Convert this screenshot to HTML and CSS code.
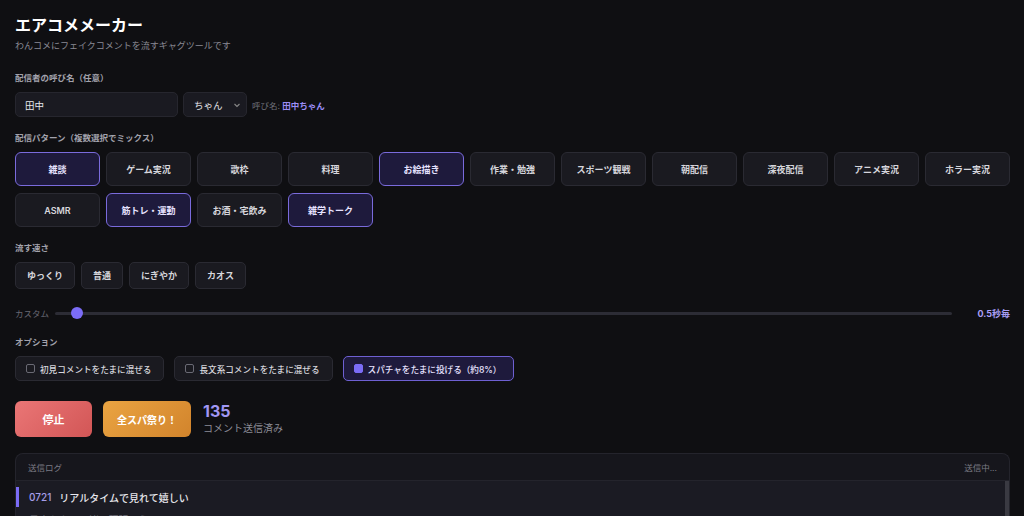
FILE: index.html
```html
<!DOCTYPE html>
<html lang="ja">
<head>
    <meta charset="utf-8">
    <title>エアコメメーカー</title>
    <link rel="stylesheet" href="styles.css">
</head>
<body>
    <div class="app">
        <h1>エアコメメーカー</h1>
        <p class="sub">わんコメにフェイクコメントを流すギャグツールです</p>

        <div class="section first">
            <div class="label">配信者の呼び名（任意）</div>
            <div class="name-row">
                <div class="input">田中</div>
                <div class="select">
                    <span>ちゃん</span>
                    <svg width="8" height="8" viewBox="0 0 8 8"><path d="M1.5 3 L4 5.5 L6.5 3" fill="none" stroke="#888" stroke-width="1.1"/></svg>
                </div>
                <div class="preview">呼び名: <b>田中ちゃん</b></div>
            </div>
        </div>

        <div class="section">
            <div class="label">配信パターン（複数選択でミックス）</div>
            <div class="patterns">
                <div class="chip on">雑談</div>
                <div class="chip">ゲーム実況</div>
                <div class="chip">歌枠</div>
                <div class="chip">料理</div>
                <div class="chip on">お絵描き</div>
                <div class="chip">作業・勉強</div>
                <div class="chip">スポーツ観戦</div>
                <div class="chip">朝配信</div>
                <div class="chip">深夜配信</div>
                <div class="chip">アニメ実況</div>
                <div class="chip">ホラー実況</div>
                <div class="chip">ASMR</div>
                <div class="chip on">筋トレ・運動</div>
                <div class="chip">お酒・宅飲み</div>
                <div class="chip on">雑学トーク</div>
            </div>
        </div>

        <div class="section">
            <div class="label">流す速さ</div>
            <div class="speeds">
                <div class="speed">ゆっくり</div>
                <div class="speed">普通</div>
                <div class="speed">にぎやか</div>
                <div class="speed">カオス</div>
            </div>
        </div>

        <div class="slider-row">
            <span class="slider-label">カスタム</span>
            <div class="track"><div class="thumb"></div></div>
            <span class="slider-value">0.5秒毎</span>
        </div>

        <div class="section">
            <div class="label">オプション</div>
            <div class="options">
                <div class="option"><span class="box"></span>初見コメントをたまに混ぜる</div>
                <div class="option"><span class="box"></span>長文系コメントをたまに混ぜる</div>
                <div class="option on"><span class="box"></span>スパチャをたまに投げる（約8%）</div>
            </div>
        </div>

        <div class="actions">
            <div class="btn stop">停止</div>
            <div class="btn festival">全スパ祭り！</div>
            <div class="count">
                <div class="count-num">135</div>
                <div class="count-label">コメント送信済み</div>
            </div>
        </div>

        <div class="log">
            <div class="log-head">
                <span>送信ログ</span>
                <span>送信中...</span>
            </div>
            <div class="log-list">
                <div class="log-row latest"><span class="log-id">0721</span>リアルタイムで見れて嬉しい</div>
                <div class="log-row">最高かよ、一緒に頑張ろう</div>
            </div>
        </div>
    </div>
</body>
</html>
```

FILE: styles.css
```css
body {
    margin: 0;
    background: #0f0f12;
    color: #e4e4ea;
    font-family: Inter, "Noto Sans CJK JP", sans-serif;
    height: 516px;
    overflow: hidden;
}
.app {
    padding: 14px 14px 0 15px;
}
h1 {
    margin: 0;
    font-size: 16px;
    line-height: 22px;
    font-weight: 700;
    color: #fff;
}
.sub {
    margin: 3px 0 0;
    font-size: 9px;
    line-height: 14px;
    color: #8a8a94;
}
.section {
    margin-top: 15px;
}
.section.first {
    margin-top: 19px;
}
.label {
    font-size: 8.5px;
    line-height: 12px;
    font-weight: 600;
    color: #a2a2ac;
    margin-bottom: 8px;
}
.name-row {
    display: flex;
    align-items: center;
}
.input {
    width: 163px;
    height: 25px;
    box-sizing: border-box;
    padding: 0 9px;
    display: flex;
    align-items: center;
    background: #1a1a21;
    border: 1px solid #26262e;
    border-radius: 5px;
    font-size: 9.5px;
    color: #e8e8ee;
}
.select {
    margin-left: 5px;
    width: 64px;
    height: 25px;
    box-sizing: border-box;
    padding: 0 5px 0 10px;
    display: flex;
    align-items: center;
    justify-content: space-between;
    background: #1a1a21;
    border: 1px solid #26262e;
    border-radius: 5px;
    font-size: 9.5px;
    color: #e0e0e6;
}
.preview {
    margin-left: 5px;
    font-size: 8.5px;
    color: #6e6e78;
}
.preview b {
    color: #9b8df6;
    font-weight: 700;
}
.patterns {
    display: grid;
    grid-template-columns: repeat(11, 1fr);
    column-gap: 6px;
    row-gap: 7px;
}
.chip {
    height: 34px;
    box-sizing: border-box;
    display: flex;
    align-items: center;
    justify-content: center;
    background: #1a1a20;
    border: 1px solid #2a2a32;
    border-radius: 6px;
    font-size: 9px;
    font-weight: 600;
    color: #d6d6dc;
}
.chip.on {
    background: #1e1a3c;
    border: 1.5px solid #7a6bdc;
    color: #e6e2ff;
}
.speeds {
    display: flex;
    gap: 6px;
}
.speed {
    height: 27px;
    box-sizing: border-box;
    padding: 0 11px;
    display: flex;
    align-items: center;
    background: #1a1a20;
    border: 1px solid #2a2a32;
    border-radius: 5px;
    font-size: 9px;
    font-weight: 600;
    color: #d6d6dc;
}
.slider-row {
    margin-top: 16px;
    height: 16px;
    display: flex;
    align-items: center;
}
.slider-label {
    font-size: 8.5px;
    color: #686872;
    width: 40px;
}
.track {
    flex: 1;
    height: 3px;
    border-radius: 2px;
    background: #2c2c35;
    position: relative;
    margin-right: 25px;
}
.thumb {
    position: absolute;
    left: 16px;
    top: -5px;
    width: 12px;
    height: 12px;
    border-radius: 50%;
    background: #7b6cf6;
}
.slider-value {
    font-size: 9px;
    font-weight: 700;
    color: #a99ff6;
}
.options {
    display: flex;
    gap: 10px;
}
.option {
    height: 25px;
    box-sizing: border-box;
    padding: 0 12px 0 10px;
    display: flex;
    align-items: center;
    gap: 5px;
    background: #1a1a20;
    border: 1px solid #2a2a32;
    border-radius: 5px;
    font-size: 8.6px;
    font-weight: 500;
    color: #d6d6dc;
}
.option .box {
    width: 7px;
    height: 7px;
    border: 1px solid #6a6a74;
    border-radius: 2px;
}
.option.on {
    background: #1e1a3c;
    border-color: #6e60d2;
    color: #e6e2ff;
}
.option.on .box {
    border-color: #7b6cf6;
    background: #7b6cf6;
}
.actions {
    margin-top: 20px;
    display: flex;
    align-items: center;
}
.btn {
    height: 36px;
    display: flex;
    align-items: center;
    justify-content: center;
    border-radius: 6px;
    font-weight: 700;
    color: #fff;
}
.stop {
    width: 77px;
    font-size: 11px;
    background: linear-gradient(135deg, #ea7676, #d25656);
}
.festival {
    width: 88px;
    margin-left: 11px;
    font-size: 10px;
    background: linear-gradient(135deg, #eaa442, #d2842c);
}
.count {
    margin-left: 12px;
    margin-top: -2px;
}
.count-num {
    font-size: 16px;
    line-height: 20px;
    font-weight: 700;
    color: #a197f4;
}
.count-label {
    font-size: 10px;
    line-height: 14px;
    color: #8c8c96;
}
.log {
    margin-top: 16px;
    background: #16161c;
    border: 1px solid #24242c;
    border-bottom: none;
    border-radius: 8px 8px 0 0;
    height: 80px;
    overflow: hidden;
}
.log-head {
    height: 26px;
    padding: 0 12px;
    display: flex;
    align-items: center;
    justify-content: space-between;
    font-size: 8.5px;
    color: #7a7a84;
    border-bottom: 1px solid #24242c;
}
.log-list {
    background: #1b1b23;
    height: 60px;
    padding-top: 6px;
    box-sizing: border-box;
    border-right: 4px solid #3a3a42;
}
.log-row {
    height: 20px;
    padding-left: 13px;
    display: flex;
    align-items: center;
    font-size: 10px;
    color: #6e6e78;
    margin-bottom: 2px;
}
.log-row.latest {
    border-left: 3px solid #7b6cf6;
    padding-left: 10px;
    color: #e6e6ec;
    font-weight: 500;
}
.log-id {
    color: #a69ee8;
    margin-right: 8px;
}
```
